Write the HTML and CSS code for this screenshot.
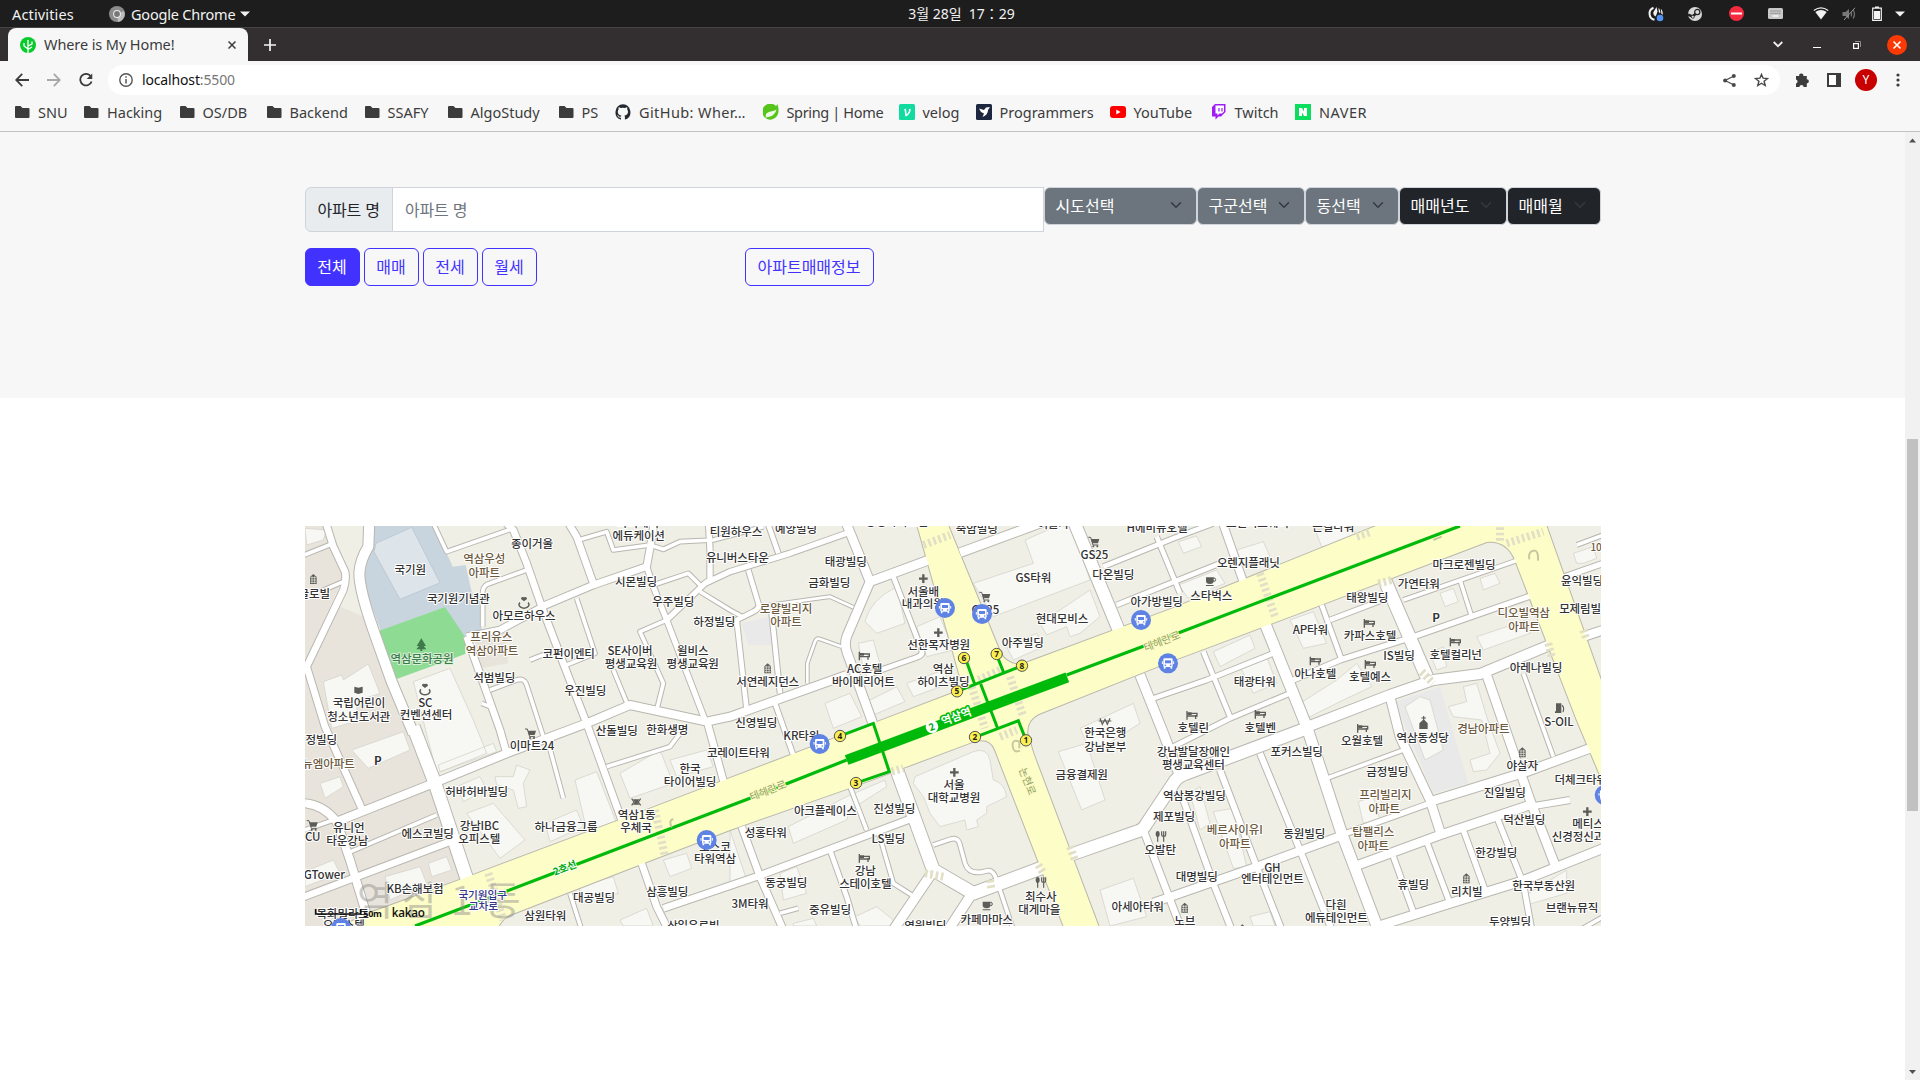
FILE: index.html
```html
<!DOCTYPE html>
<html lang="ko">
<head>
<meta charset="utf-8">
<title>Where is My Home!</title>
<link rel="stylesheet" href="styles.css">
</head>
<body>
<header class="panel">
  <div class="panel-left">
    <span class="activities">Activities</span>
    <svg class="app-icon" width="16" height="16" viewBox="0 0 16 16"><circle cx="8" cy="8" r="8" fill="#8b8b8b"/><path d="M8 8 15 5A8 8 0 0 1 9 16Z" fill="#bdbdbd"/><circle cx="8" cy="8" r="3.9" fill="#eee"/><circle cx="8" cy="8" r="2.9" fill="#777"/></svg>
    <span class="app-name">Google Chrome</span>
    <svg width="10" height="6" viewBox="0 0 10 6"><path d="M0 .5H10L5 5.5Z" fill="#f2f2f2"/></svg>
  </div>
  <div class="clock">3월 28일&nbsp; 17：29</div>
  <div class="panel-right">
    <svg class="tray-a" width="16" height="16" viewBox="0 0 16 16"><path d="M5.500 1.800A6.300 6.300 0 0 0 6.500 13.800" fill="none" stroke="#f2f2f2" stroke-width="2"/><path d="M8.500 1 5.200 6.500Q5 9 7.500 10.500L8.500 8.500 9.500 5.500ZM10.500 1.500Q13 5 12 7.500L10.800 6ZM12.800 2.800Q15.500 5.500 14.500 9L13.300 7.500Z" fill="#f2f2f2"/><circle cx="12" cy="12" r="3.300" fill="#5294f5"/></svg>
    <svg class="tray-b" width="14" height="14" viewBox="0 0 14 14"><circle cx="7" cy="7" r="7" fill="#d8d8d8"/><path d="M0 7.6 4.5 9.500 8 6.500" stroke="#222" stroke-width="2.600" fill="none"/><circle cx="9.300" cy="5" r="2.600" fill="#d8d8d8" stroke="#222" stroke-width="1.200"/><circle cx="4.800" cy="9.800" r="1.500" fill="#d8d8d8" stroke="#222" stroke-width=".8"/></svg>
    <svg class="tray-c" width="15" height="15" viewBox="0 0 15 15"><circle cx="7.5" cy="7.5" r="7.5" fill="#f52a3f"/><rect x="2" y="6.5" width="11" height="2" fill="#fff"/></svg>
    <svg class="tray-d" width="15" height="12" viewBox="0 0 15 12"><rect width="15" height="11" rx="1.5" fill="#c9c9c9"/><path d="M2.5 3H13M2.5 5.3H13" stroke="#777" stroke-dasharray="1.2 .8"/><path d="M4.5 8H10.5" stroke="#fff" stroke-width="1.3"/></svg>
    <svg class="tray-e" width="16" height="13" viewBox="0 0 16 13"><path d="M.8 3.5Q8-1.6 15.2 3.5" fill="none" stroke="#eee" stroke-width="1.2"/><path d="M2.3 5Q8 1.2 13.7 5L8 12.5Z" fill="#f2f2f2"/></svg>
    <svg class="tray-f" width="15" height="14" viewBox="0 0 15 14"><path d="M.5 5H3.500L7 2V12L3.500 9H.5Z" fill="#777"/><path d="M9 5Q10.500 7 9 9.500M11 3Q14 7 11 11.500" fill="none" stroke="#777" stroke-width="1.200"/><path d="M2 13 13 .8" stroke="#999"/></svg>
    <svg class="tray-g" width="10" height="15" viewBox="0 0 10 15"><path d="M3 1H7M.7 2.2H9.3V14.3H.7Z" fill="none" stroke="#f2f2f2" stroke-width="1.2"/><rect x="2" y="5" width="6" height="8" fill="#f2f2f2"/></svg>
    <svg width="10" height="6" viewBox="0 0 10 6"><path d="M0 .5H10L5 5.5Z" fill="#f2f2f2"/></svg>
  </div>
</header>

<div class="tabstrip">
  <div class="tab">
    <svg width="16" height="16" viewBox="0 0 16 16"><circle cx="8" cy="8" r="8" fill="#09ca2c"/><path d="M8 16V3M8 12 4 9V6M8 9 12 7V4.5M8 12.5 12 10" fill="none" stroke="#fff" stroke-width="1.3"/></svg>
    <span class="tab-title">Where is My Home!</span>
    <svg width="8" height="8" viewBox="0 0 8 8"><path d="M.5.5 7.5 7.5M7.5.5.5 7.5" stroke="#3c3c3c" stroke-width="1.5"/></svg>
  </div>
  <svg class="new-tab" width="12" height="12" viewBox="0 0 12 12"><path d="M6 0V12M0 6H12" stroke="#f5f5f5" stroke-width="1.7"/></svg>
  <div class="win-buttons">
    <svg class="wb-search" width="10" height="7" viewBox="0 0 10 7"><path d="M.7 1 5 5.2 9.3 1" fill="none" stroke="#eee" stroke-width="1.8"/></svg>
    <svg class="wb-min" width="8" height="8" viewBox="0 0 8 8"><path d="M0 6.5H8" stroke="#fff"/></svg>
    <svg class="wb-max" width="8" height="8" viewBox="0 0 8 8"><path d="M2 .5H7.5V6" fill="none" stroke="#8d8b8c"/><rect x=".6" y="2.6" width="4.8" height="4.8" fill="none" stroke="#fff" stroke-width="1.2"/></svg>
    <svg width="20" height="20" viewBox="0 0 20 20"><circle cx="10" cy="10" r="10" fill="#fb3904"/><path d="M6.5 6.5 13.5 13.5M13.5 6.5 6.5 13.5" stroke="#fff" stroke-width="1.6"/></svg>
  </div>
</div>

<div class="toolbar">
  <svg class="nav-back" width="14" height="14" viewBox="0 0 14 14"><path d="M14 7H1.5M7.2.8 1.2 7 7.2 13.2" fill="none" stroke="#3c3c3c" stroke-width="1.8"/></svg>
  <svg class="nav-fwd" width="14" height="14" viewBox="0 0 14 14"><path d="M0 7H12.5M6.8.8 12.8 7 6.8 13.2" fill="none" stroke="#a8a8a8" stroke-width="1.8"/></svg>
  <svg class="nav-reload" width="14" height="14" viewBox="0 0 15 15"><path d="M12.4 3.2A6.2 6.2 0 1 0 13.5 9" fill="none" stroke="#3c3c3c" stroke-width="1.9"/><path d="M14.2.5V6.5H8.2Z" fill="#3c3c3c"/></svg>
  <div class="omnibox">
    <svg width="14" height="14" viewBox="0 0 14 14"><circle cx="7" cy="7" r="6.2" fill="none" stroke="#555" stroke-width="1.4"/><path d="M7 6V10.5M7 3.3V4.8" stroke="#555" stroke-width="1.5"/></svg>
    <span class="url">localhost<span class="port">:5500</span></span>
    <svg class="share" width="13" height="13" viewBox="0 0 13 13"><path d="M11 2 2 6.5 11 11" fill="none" stroke="#484848" stroke-width="1.2"/><circle cx="10.8" cy="2.1" r="2" fill="#484848"/><circle cx="2.1" cy="6.5" r="2" fill="#484848"/><circle cx="10.8" cy="10.9" r="2" fill="#484848"/></svg>
    <svg width="15" height="14" viewBox="0 0 15 14"><path d="M7.5 1.4 9.1 5.2 13.5 5.5 10.1 8.3 11.2 12.5 7.5 10.2 3.8 12.5 4.9 8.3 1.5 5.5 5.9 5.2Z" fill="none" stroke="#484848" stroke-width="1.4"/></svg>
  </div>
  <svg class="ext" width="15" height="15" viewBox="0 0 15 15"><path d="M1 3H4.200A2.100 2.100 0 1 1 8.300 3H11.800V6.200A2.100 2.100 0 1 1 11.800 10.400V14H8.600A2.100 2.100 0 0 0 4.400 14H1V10.400A2 2 0 0 0 1 6.500Z" fill="#3c3c3c"/></svg>
  <svg class="side" width="14" height="14" viewBox="0 0 14 14"><rect width="14" height="14" fill="#3c3c3c"/><rect x="2" y="2" width="7" height="10" fill="#fff"/></svg>
  <div class="avatar">Y</div>
  <svg width="4" height="14" viewBox="0 0 4 14"><circle cx="2" cy="2" r="1.6" fill="#3c3c3c"/><circle cx="2" cy="7" r="1.6" fill="#3c3c3c"/><circle cx="2" cy="12" r="1.6" fill="#3c3c3c"/></svg>
</div>

<svg class="defs" width="0" height="0"><defs>
  <g id="folder"><path d="M0 3Q0 2 1 2H5.5L7.5 4H13.5Q14.5 4 14.5 5V13Q14.5 14 13.5 14H1Q0 14 0 13Z" fill="#3c3c3c"/></g>
</defs></svg>
<nav class="bookmarks">
  <a class="bm b1"><svg width="15" height="16"><use href="#folder"/></svg>SNU</a>
  <a class="bm b2"><svg width="15" height="16"><use href="#folder"/></svg>Hacking</a>
  <a class="bm b3"><svg width="15" height="16"><use href="#folder"/></svg>OS/DB</a>
  <a class="bm b4"><svg width="15" height="16"><use href="#folder"/></svg>Backend</a>
  <a class="bm b5"><svg width="15" height="16"><use href="#folder"/></svg>SSAFY</a>
  <a class="bm b6"><svg width="15" height="16"><use href="#folder"/></svg>AlgoStudy</a>
  <a class="bm b7"><svg width="15" height="16"><use href="#folder"/></svg>PS</a>
  <a class="bm b8"><svg width="16" height="16" viewBox="0 0 16 16"><path d="M8 .2a8 8 0 0 0-2.5 15.4c.4 0 .5-.2.5-.4v-1.5c-2.200.5-2.700-.9-2.700-.9-.4-.9-.9-1.200-.9-1.200-.7-.5 0-.5 0-.5.8.1 1.200.8 1.200.8.7 1.200 1.900.9 2.400.7 0-.5.300-.9.500-1.100-1.800-.2-3.700-.9-3.700-4 0-.9.300-1.600.8-2.100 0-.2-.3-1 .1-2.100 0 0 .7-.2 2.200.8a8 8 0 0 1 4 0c1.500-1 2.200-.8 2.200-.8.4 1.100.1 1.900.1 2.100.5.600.8 1.300.8 2.100 0 3.100-1.900 3.800-3.700 4 .3.200.6.700.6 1.500v2.200c0 .2.100.5.500.4A8 8 0 0 0 8 .2Z" fill="#24292f"/></svg>GitHub: Wher…</a>
  <a class="bm b9"><svg width="16" height="16" viewBox="0 0 16 16"><path d="M14.500 0C16 5 16 9 14 12A8 8 0 1 1 13 2Q14 1.500 14.500 0Z" fill="#55c41b"/><path d="M2.500 13.500C8 13 12 11 13.500 5.500 10 8 6 6.500 3 10" fill="#eefbe4"/></svg>Spring | Home</a>
  <a class="bm b10"><svg width="16" height="16" viewBox="0 0 16 16"><rect width="16" height="16" rx="1.500" fill="#12dba0"/><path d="M5 5.200 7 4.700 7.700 10.500Q10.500 8 10 5.800L9.700 5 11.500 4.700Q12.500 8.500 7.500 12.300H6.300L5.600 6.200Z" fill="#fff"/></svg>velog</a>
  <a class="bm b11"><svg width="16" height="16" viewBox="0 0 16 16"><rect width="16" height="16" rx="1.500" fill="#1e2740"/><path d="M3 4.500 8 6 10 3.500 14 3 12 6Q12 11 6.500 13L8 9.500 5 8Z" fill="#fff"/></svg>Programmers</a>
  <a class="bm b12"><svg width="16" height="16" viewBox="0 0 16 16"><rect y="2" width="16" height="12" rx="3" fill="#f00"/><path d="M6.300 5.500V10.500L10.500 8Z" fill="#fff"/></svg>YouTube</a>
  <a class="bm b13"><svg width="16" height="16" viewBox="0 0 16 16"><path d="M1 3 4 0H14.500V8L10 12.500H7.500L4.500 15.500V12.500H1Z" fill="#a01cf5"/><path d="M4.500 1.500H13V7.500L11 9.500H8.500L6.500 11.500V9.500H4.500Z" fill="#fff"/><path d="M8 4V7.500M11 4V7.500" stroke="#a01cf5" stroke-width="1.200"/></svg>Twitch</a>
  <a class="bm b14"><svg width="16" height="16" viewBox="0 0 16 16"><rect width="16" height="16" fill="#0ade5c"/><path d="M4 4H7L9 7.500V4H12V12H9L7 8.500V12H4Z" fill="#fff"/></svg>NAVER</a>
</nav>

<div class="viewport">
<main class="page">
  <section class="search">
    <div class="container">
      <div class="filters">
        <div class="input-group"><label class="addon">아파트 명</label><div class="field">아파트 명</div></div>
        <div class="select s1"><span>시도선택</span><svg width="16" height="12" viewBox="0 0 16 16"><path d="M2 5l6 6 6-6" class="chev"/></svg></div>
        <div class="select s2"><span>구군선택</span><svg width="16" height="12" viewBox="0 0 16 16"><path d="M2 5l6 6 6-6" class="chev"/></svg></div>
        <div class="select s3"><span>동선택</span><svg width="16" height="12" viewBox="0 0 16 16"><path d="M2 5l6 6 6-6" class="chev"/></svg></div>
        <div class="select dark s4"><span>매매년도</span><svg width="16" height="12" viewBox="0 0 16 16"><path d="M2 5l6 6 6-6" class="chev"/></svg></div>
        <div class="select dark s5"><span>매매월</span><svg width="16" height="12" viewBox="0 0 16 16"><path d="M2 5l6 6 6-6" class="chev"/></svg></div>
      </div>
      <div class="deals">
        <button class="btn active">전체</button><button class="btn">매매</button><button class="btn">전세</button><button class="btn">월세</button><button class="btn info">아파트매매정보</button>
      </div>
    </div>
  </section>
  <section class="map-section">
    <div class="container">
<svg class="map" width="1296" height="400" viewBox="15 18 3888 1200">
<defs>
  <g id="streets">
    <path class="w30" d="M208 0 205 80Q180 120 178 160 178 210 220 330L275 485 340 640"/>
    <path class="w40" d="M340 620 405 790 505 1090"/>
    <path class="w20" d="M75 0 100 80 135 155Q140 180 130 210L20 440 75 620 185 865"/>
    <path class="w12" d="M0 110 95 72M60 215 130 185M400 10 440 95 640 25M835 60 920 35 940 90 1050 75 1090 88 1140 65 1240 60 1390 20M1060 195 1165 160 1200 195M1200 215 1290 270 1330 292M548 320V215Q550 195 570 190L680 150M830 235 885 400 800 435M690 420 740 400M1100 300 1020 335 1090 490 1070 570M940 450 985 560M570 510 650 480Q672 472 680 495L730 650M545 550 570 560"/>
    <path class="w20" d="M610 0 640 30 680 130 725 260 790 430 860 610 900 720 965 900M800 0 830 50 880 190M725 260 880 195 1040 140 1050 85 1062 10M500 350 600 330 725 262M500 350 600 630 620 700"/>
    <path class="w16" d="M1225 0 1230 90V180L1215 190M1040 140 1060 200 1100 300 1215 600M1100 300 1215 190 1290 155 1470 100 1640 40"/>
    <path class="w24" d="M15 850Q70 855 110 905L150 1020 210 1218M110 905 400 790 620 700 860 610 990 555 1220 605 1290 590 1640 465"/>
    <path class="w12" d="M740 650 790 835M920 740 1110 680 1140 640M140 1000 410 885M0 935 100 900M810 1120 845 1230"/>
    <path class="w20" d="M0 1135 450 965M1220 600 1275 800M1025 1030 1070 1160 1105 1230M1090 1165 1370 1070 1850 890M1325 920 1380 1070 1450 1230M2530 930 2645 1230"/>
    <path class="w14" d="M1590 990 1640 1130 1670 1230M1425 550 1485 720M1400 0 1435 100"/>
    <path class="w12" d="M1650 800 1700 930M1735 935 1780 1090 1835 1125M1900 975 1950 958Q1975 950 1980 975L1995 1030Q2005 1060 2040 1057L2065 1052Q2080 1050 2090 1080L2140 1230M1440 1180 1495 1165"/>
    <path class="w40" d="M1785 735 1900 1050M1900 1050 2020 1120 2235 1040"/>
    <path class="w28" d="M1780 1230 1895 1060M2010 1130 1945 1230M2520 465 2590 640 2640 770"/>
    <path class="w36" d="M2310 1005 2510 935Q2530 930 2540 910L2620 790Q2630 770 2660 760L3020 625M2320 0 2460 340"/>
    <path class="w26" d="M1635 0 1710 185 1900 115M1710 185 1640 350Q1632 375 1642 400L1722 620M1980 98 2260-5"/>
    <path class="w14" d="M1780 170 1865 390Q1870 405 1850 412L1700 465M1345 150 1375 250Q1380 265 1360 275L1310 300 1340 570M1415 280 1440 520"/>
    <path class="w10" d="M1375 260 1590 230 1660 262M1625 380 1560 357Q1550 353 1545 365L1522 430V490"/>
    <path class="w14" d="M2410 140 2620 55 2740 10M2450 255 2610 190 2760 130M2560 535 2720 480 2920 400M2570 50 2640 220M2710 395 2790 590M2620 680 2790 595 2970 520M3065 255 3125 420M3090 300 3260 235"/>
    <path class="w22" d="M2765 0 2835 200"/>
    <path class="w32" d="M2895 310 3020 620 3125 940 3235 1230"/>
    <path class="w16" d="M2980 480 3120 420 3340 350 3700 225"/>
    <path class="w40" d="M3250 170 3380 470"/>
    <path class="w30" d="M3010 625 3270 525 3400 480 3540 462 3750 375"/>
    <path class="w26" d="M3270 530 3300 650 3390 840 3425 950M3390 845 3680 755 3870 685M3560 465 3690 840 3765 1035"/>
    <path class="w12" d="M3310 240 3660 118M3480 180 3515 290M3670 460 3760 710M3830 75 3910 45M3080 775 3310 690M3840 1230 3910 1190"/>
    <path class="w16" d="M3790 172 3910 130M3125 945 3390 850M3280 1010 3345 1190M3380 965 3450 1150M3490 930 3555 1110M3590 890 3670 1090 3695 1230"/>
    <path class="w26" d="M3850 350 3910 330M3175 1035 3420 945 3690 855M3230 1220 3450 1150 3660 1085 3910 985"/>
    <path class="w18" d="M3690 860 3810 840M2880 700 3000 990 3095 1230M2760 750 2870 1040 2945 1230M2650 840 2740 1090 2795 1230"/>
    <path class="w24" d="M2560 1148 2870 1040 3130 945"/>
  </g>
  <g id="avenues">
    <path d="M100 1235 190 1185 260 1160 500 1072 1060 862 1720 610 1990 507 1850 10H1942L2100 395Q2115 430 2160 435L2610 268 2950 130 3260 5H3735L3910 500V790L3830 600 3645 120Q3620 60 3560 66L2970 290 2610 425 2215 583Q2180 600 2182 640L2200 700 2400 1230H2295L2085 690Q2070 650 2020 665L1660 800 1290 930 1030 1030 630 1185Q600 1200 590 1235Z"/>
  </g>
  <g id="bed"><path d="M-14-12V14M-14-5H16V3H-14M12 0V12" fill="none" stroke="#5c5c58" stroke-width="4"/><path d="M-12-8H0V0H-12Z" fill="#5c5c58"/></g>
  <g id="cart"><path d="M-17-13H-10L-3 10H13" fill="none" stroke="#5c5c58" stroke-width="3"/><path d="M-9-8H16L12 5H-5Z" fill="#5c5c58"/><circle cx="-2" cy="14" r="3" fill="#5c5c58"/><circle cx="10" cy="14" r="3" fill="#5c5c58"/></g>
  <g id="house"><path d="M-10 15V-6L0-15 10-6V15Z" fill="#5c5c58"/><path d="M-4-8V13M4-8V13M-9-4H9M-9 3H9M-9 10H9" stroke="#f0efe6" stroke-width="2"/></g>
  <g id="cross"><path d="M0-13V13M-13 0H13" stroke="#5c5c58" stroke-width="7"/></g>
  <g id="ring"><path d="M-12 0A15 10 0 1 0 12 0" fill="none" stroke="#5c5c58" stroke-width="4.500"/><path d="M0-4-9-11Q-9-19-1-16 9-19 9-11Z" fill="#5c5c58"/></g>
  <g id="cup"><path d="M-15-11H8V0Q8 9-3 9-15 9-15 0ZM-15 12H8V15H-15Z" fill="#5c5c58"/><circle cx="9" cy="-4" r="5" fill="none" stroke="#5c5c58" stroke-width="3"/></g>
  <g id="fork"><path d="M-9-2V16M9-2V16M3-15V-4Q3 0 9 0T15-4V-15M9-15V0" fill="none" stroke="#5c5c58" stroke-width="3.500"/><ellipse cx="-9" cy="-7" rx="6" ry="9" fill="#5c5c58"/></g>
  <g id="bus"><circle r="30" fill="#5f83e4"/><rect x="-14" y="-15" width="28" height="26" rx="4" fill="#fff"/><path d="M-9-9H9V0H-9Z" fill="#5f83e4"/><path d="M-10 10V16M10 10V16" stroke="#fff" stroke-width="5"/><circle cx="-8" cy="6" r="2.500" fill="#5f83e4"/><circle cx="8" cy="6" r="2.500" fill="#5f83e4"/><path d="M-17-6V2M17-6V2" stroke="#fff" stroke-width="3"/></g>
</defs>
<rect x="15" y="18" width="3888" height="1200" fill="#f0efe6"/>
<path fill="#e8e4dc" d="M15 460 110 255 215 300 345 640 440 940 500 1080 180 1218H15ZM15 18H75L130 170 15 430ZM520 345 610 320 625 430 545 445Z"/>
<path fill="#c9d5de" d="M222 18H405L458 140 497 135 515 215 545 245V330L490 360 435 262 242 332 190 190Q185 140 222 80Z"/>
<path fill="#dde5ea" stroke="#b3bfc8" stroke-width="2" d="M228 70 335 22 420 188 300 238 290 220 222 95Z"/>
<path fill="#8edb94" d="M238 332 435 261 495 350 496 402 290 477Z"/>
<path fill="#e9e9ea" d="M1325 310 1410 290 1420 375H1345ZM3285 545 3420 500 3505 790 3400 820Z"/>
<g class="buildings">
  <path d="M70 485 125 465 130 480 205 432 240 520 165 545 180 600 95 625ZM15 25 80 30 70 60 20 75ZM340 485 450 445 520 600 560 700 410 760ZM155 690 310 635 330 690 205 745ZM415 735 580 670 590 695 420 755ZM60 790 120 770 130 800 75 835ZM585 770 640 770 650 735 690 750 670 790 680 860 655 865 640 810 590 795ZM470 800 540 770 560 810 490 845ZM825 780 890 755 950 910 860 930ZM735 910 830 870 850 920 750 965ZM960 760 1080 690 1120 790 990 835ZM500 880 580 850 675 960 600 1015ZM385 1030 440 1010 455 1050 395 1070ZM15 1055 100 1020 120 1060 15 1100ZM255 1070 360 1040 380 1090 270 1140ZM835 1100 940 1070 955 1120 850 1145ZM1090 1020 1160 1000 1175 1045 1110 1070ZM960 1200 1040 1165 1060 1218H970ZM1110 720 1220 690 1240 740 1130 770Z"/>
  <path d="M1695 305Q1710 240 1790 200L1815 310 1730 340ZM1675 370 1720 360 1745 450 1690 450ZM1575 550 1650 520 1685 590 1600 625ZM1700 545 1790 500 1815 545 1720 585ZM1820 490 1930 450 1950 490 1840 530ZM1850 320 1920 290 1960 390 1880 410ZM2020 190 2200 130 2175 60 2270 18 2320 20 2370 180 2080 290ZM2120 380 2210 340 2230 380 2140 420ZM2220 310 2370 210 2400 290 2340 340 2310 350 2300 320 2240 345ZM2340 625 2500 550 2520 610 2410 680 2370 690ZM2275 695 2360 670 2415 840 2345 870ZM1845 770 2020 695Q2060 680 2070 720L2080 780Q2115 790 2120 830L2060 860V880L2030 900 2035 920 2000 930 1995 900 1920 920 1890 880 1870 830 1840 790ZM1465 920 1640 830 1755 780 1760 800 1650 870 1640 900 1480 970ZM1440 1060 1490 1040 1520 1120 1450 1140ZM1665 1190 1730 1160 1780 1200 1770 1218H1680ZM1290 930 1340 1080 1300 1100 1290 1090ZM2400 1110 2500 1075 2540 1190 2430 1218ZM1480 1210 1540 1195 1550 1218H1480Z"/>
  <path d="M2635 65 2690 48 2705 80 2650 100ZM2635 195 2750 150 2775 190 2665 235ZM2810 90 2890 65 2910 110 2830 140ZM3045 30 3150 18 3180 60 3065 80ZM2740 395 2850 345 2865 385 2760 440ZM2820 440 2900 410 2930 490 2860 520ZM2970 300 3040 275 3080 370 3010 385ZM3000 550 3110 480 3170 430 3215 500 3130 540 3020 595ZM3420 220 3460 205 3475 245 3435 260ZM3540 175 3585 160 3600 190 3550 210ZM3530 350 3680 300 3690 340 3550 390ZM3445 560 3500 545 3490 500 3530 490 3560 590 3600 700 3560 750 3520 755 3510 720 3570 700 3545 600 3460 590ZM3315 560 3360 530 3390 540 3430 690 3375 720ZM3820 100 3880 80 3890 115 3850 130 3830 130ZM2740 875 2800 865 2840 1040 2800 1045ZM2670 820 2700 800 2730 910 2700 930ZM2850 1190 2910 1175 2925 1218H2860ZM3670 1130 3800 1050 3800 1120 3680 1155ZM3390 400 3430 380 3440 440 3410 450ZM3175 845 3220 830 3240 900 3190 910Z"/>
</g>
<use href="#streets" class="street-edge"/>
<use href="#avenues" class="avenue-edge"/>
<use href="#streets" class="street-fill"/>
<use href="#avenues" class="avenue-fill"/>
<g class="crosswalk">
  <path d="M1870 75 1950 45M2035 480 2100 450M3170 50 3215 35M3620 70 3730 35"/>
  <path d="M2130 470 2170 590M2015 500 2055 625M2880 160 2925 290M1065 870 1095 1010M565 1060 610 1200M3600 22 3600 70M2100 650 2150 630M1775 755 1810 745M3235 190 3275 180M3745 370 3755 410M3850 330 3860 360M2310 980 2325 1020M2215 1035 2230 1060M2070 1080 2075 1110M3365 455 3400 490M1875 1060 1930 1070"/>
</g>
<g class="subway">
  <path class="thin" d="M345 1218 760 1060 1350 835 1640 720M2300 465 2580 360 2920 230 3480 18"/>
  <path class="station" d="M1640 720 2302 472"/>
  <path class="exit" d="M1625 646 1720 610 1768 755 1672 788M1996 415 2024 492M2042 492 2094 628M1970 515 2165 438M2090 405 2112 460M2030 650 2155 602 2176 655"/>
</g>
<g class="watermark"><text x="225" y="1186">역</text><text x="360" y="1186">삼</text><text x="485" y="1186">1</text><text x="608" y="1186">동</text></g>
<g class="uturn"><path d="M1115 922Q1105 900 1120 898M2160 692Q2140 700 2138 678T2158 665V685M3688 118Q3684 95 3700 92T3714 122M3400 60 3425 50"/></g>

<g class="labels" transform="translate(0 12)">
  <text x="696" y="73">종이거울</text><text x="331" y="151" >국기원</text><text x="475" y="238">국기원기념관</text><text x="672" y="289">아모르하우스</text>
  <text x="1014" y="10">와이케이</text><text x="1016" y="48">에듀케이션</text><text x="1008" y="187">시몬빌딩</text><text x="1120" y="247">우주빌딩</text><text x="1243" y="307">하정빌딩</text>
  <text x="806" y="403">코펀이엔티</text><text x="990" y="394">SE사이버</text><text x="993" y="433">평생교육원</text><text x="1178" y="394">윌비스</text><text x="1178" y="433">평생교육원</text>
  <text x="583" y="475">석범빌딩</text><text x="856" y="514">우진빌딩</text><text x="177" y="550">국립어린이</text><text x="176" y="590">청소년도서관</text><text x="376" y="550">SC</text><text x="378" y="586">컨벤션센터</text><text x="43" y="221">글로빌</text>
  <g class="apt"><text x="553" y="118">역삼우성</text><text x="553" y="160">아파트</text><text x="574" y="352">프리유스</text><text x="576" y="394">역삼아파트</text></g>
  <text class="park" x="366" y="418">역삼문화공원</text>
</g>
<g class="labels" transform="translate(1290 12)">
  <text x="18" y="35">티원하우스</text><text x="198" y="28">예양빌딩</text><text x="22" y="115">유니버스타운</text><text x="500" y="6">강영하이츠빌</text><text x="347" y="127">태광빌딩</text><text x="298" y="188">금화빌딩</text>
  <text x="580" y="215">서울배</text><text x="578" y="253">내과의원</text><text x="626" y="376">선한목자병원</text><text x="113" y="487">서연레지던스</text><text x="404" y="448">AC호텔</text><text x="400" y="487">바이메리어트</text><text x="640" y="447">역삼</text><text x="640" y="487">하이츠빌딩</text>
  <text x="79" y="609">신영빌딩</text><text x="740" y="28">죽암빌딩</text><text x="970" y="12">여울가</text><text x="910" y="173">GS타워</text><text x="1093" y="104">GS25</text><text x="766" y="269">GS25</text><text x="1150" y="166">다온빌딩</text><text x="996" y="296">현대모비스</text><text x="878" y="370">아주빌딩</text><text x="1280" y="247">아가방빌딩</text><text x="1281" y="25">H에비뉴호텔</text>
  <text x="1126" y="640">한국은행</text><text x="1126" y="680">강남본부</text>
  <g class="apt"><text x="168" y="266">로얄빌리지</text><text x="168" y="307">아파트</text></g>
</g>
<g class="labels" transform="translate(2580 12)">
  <text x="292" y="8">오렌지스퀘어</text><text x="265" y="128">오렌지플래닛</text><text x="154" y="229">스타벅스</text><text x="520" y="22">큰길타워</text><text x="912" y="136">마크로젠빌딩</text><text x="776" y="193">가연타워</text><text x="622" y="235">태왕빌딩</text><text x="451" y="331">AP타워</text><text x="630" y="348">카파스호텔</text><text x="717" y="409">IS빌딩</text><text x="887" y="406">호텔컬리넌</text>
  <text x="466" y="463">아나호텔</text><text x="630" y="471">호텔예스</text><text x="284" y="487">태광타워</text><text x="1128" y="444">아레나빌딩</text><text x="1197" y="607">S-OIL</text><text x="1266" y="184">윤익빌딩</text><text x="1276" y="268">모제림빌딩</text>
  <text x="100" y="624">호텔린</text><text x="301" y="623">호텔벤</text><text x="606" y="664">오월호텔</text><text x="788" y="654">역삼동성당</text>
  <g class="apt"><text x="1091" y="280">디오빌역삼</text><text x="1092" y="321">아파트</text><text x="1325" y="80" class="thin-label">1004</text><text x="970" y="626">경남아파트</text></g>
  <text class="pk" x="828" y="295">P</text>
</g>
<g class="labels" transform="translate(0 612)">
  <text x="48" y="59">우정빌딩</text><text x="696" y="79">이마트24</text><text x="950" y="34">산돌빌딩</text><text x="1102" y="30">한화생명</text><text x="1315" y="98">코레이트타워</text><text x="1170" y="148">한국</text><text x="1170" y="187">타이어빌딩</text><text x="530" y="217">허바허바빌딩</text><text x="1010" y="286">역삼1동</text><text x="1008" y="324">우체국</text><text x="798" y="322">하나금융그룹</text><text x="538" y="319">강남IBC</text><text x="538" y="358">오피스텔</text><text x="383" y="343">에스코빌딩</text><text x="146" y="325">유니언</text><text x="142" y="364">타운강남</text><text x="38" y="352">CU</text><text x="73" y="464">GTower</text><text x="345" y="506">KB손해보험</text><text x="882" y="535">대공빌딩</text><text x="1102" y="516">삼흥빌딩</text><text x="736" y="589">삼원타워</text><text x="1245" y="380">포스코</text><text x="1245" y="416">타워역삼</text><text x="1180" y="618">삼일유로빌</text>
  <text x="128" y="583">목화밀라트</text><text x="131" y="616">오피스텔</text>
  <g class="apt"><text x="70" y="132">정뉴엠아파트</text></g><text class="pk" x="233" y="124">P</text>
  <g class="junction"><text x="548" y="525">국기원입구</text><text x="550" y="557">교차로</text></g>
</g>
<g class="labels" transform="translate(1290 612)">
  <text x="214" y="48">KR타워</text><text x="286" y="273">아크플레이스</text><text x="493" y="268">진성빌딩</text><text x="107" y="338">성홍타워</text><text x="475" y="358">LS빌딩</text><text x="672" y="195">서울</text><text x="672" y="235">대학교병원</text><text x="1055" y="166">금융결제원</text><text x="406" y="454">강남</text><text x="406" y="493">스테이호텔</text><text x="169" y="490">동궁빌딩</text><text x="60" y="553">3M타워</text><text x="300" y="569">중유빌딩</text><text x="586" y="618">영원빌딩</text><text x="770" y="600">카페마마스</text><text x="932" y="530">최수사</text><text x="928" y="569">대게마을</text><text x="1223" y="562">아세아타워</text><text x="1291" y="391">오발탄</text>
</g>
<g class="labels" transform="translate(2580 612)">
  <text x="100" y="97">강남발달장애인</text><text x="100" y="136">평생교육센터</text><text x="410" y="97">포커스빌딩</text><text x="682" y="157">금정빌딩</text><text x="1087" y="138">야살자</text><text x="1262" y="179">더체크타워</text><text x="1034" y="220">진일빌딩</text><text x="103" y="229">역삼봉강빌딩</text><text x="42" y="290">제포빌딩</text><text x="433" y="342">동원빌딩</text><text x="1093" y="301">덕산빌딩</text><text x="1284" y="313">메티스</text><text x="1254" y="352">신경정신과</text><text x="1009" y="400">한강빌딩</text><text x="337" y="443">GH</text><text x="337" y="478">엔터테인먼트</text><text x="110" y="471">대명빌딩</text><text x="760" y="495">휴빌딩</text><text x="920" y="517">리치빌</text><text x="1151" y="498">한국부동산원</text><text x="528" y="555">다흰</text><text x="529" y="594">에듀테인먼트</text><text x="1236" y="564">브랜뉴뮤직</text><text x="1050" y="607">두양빌딩</text><text x="74" y="604">노브</text>
  <g class="apt"><text x="676" y="226">프리빌리지</text><text x="673" y="268">아파트</text><text x="640" y="336">탑팰리스</text><text x="640" y="378">아파트</text><text x="224" y="331">베르사이유I</text><text x="224" y="373">아파트</text></g>
</g>
<g>
  <use href="#house" x="40" y="177"/><use href="#ring" x="672" y="248"/><use href="#ring" x="375" y="508"/><use href="#house" x="1403" y="445"/><use href="#cross" x="1870" y="176"/><use href="#cross" x="1915" y="338"/><use href="#bed" x="1692" y="407"/><use href="#cart" x="2382" y="65"/><use href="#cart" x="2055" y="230"/><use href="#cup" x="2733" y="183"/>
  <use href="#bed" x="3207" y="309"/><use href="#bed" x="3465" y="365"/><use href="#bed" x="3045" y="422"/><use href="#bed" x="3210" y="432"/><use href="#bed" x="2675" y="585"/><use href="#bed" x="2880" y="582"/><use href="#bed" x="3187" y="624"/><use href="#cart" x="692" y="640"/><use href="#cart" x="37" y="915"/><use href="#cross" x="1963" y="757"/><use href="#bed" x="1692" y="1014"/><use href="#cup" x="2063" y="1156"/><use href="#fork" x="2222" y="1087"/><use href="#fork" x="2582" y="949"/><use href="#house" x="3667" y="697"/><use href="#cross" x="3862" y="875"/><use href="#house" x="3499" y="1075"/><use href="#house" x="2654" y="1163"/><use href="#house" x="2827" y="1228"/>
  <path fill="#3f7a4a" d="M364 355 378 378H371L379 388H367V393H361V388H349L357 378H350Z"/>
  <path fill="#5c5c58" d="M163 500 175 503 188 500V518L175 522 163 518ZM3358 627V610L3371 598 3383 610V627ZM3768 550H3784V579H3765V574H3768ZM999 838H1018L1013 846 1018 854H999L1004 846Z"/><path d="M3371 588V602M3364 594H3378M3786 556Q3794 562 3789 576M995 836 1002 846 995 856M1022 836 1015 846 1022 856M2400 595 2407 613 2415 598 2422 613 2430 595M2396 603H2434" fill="none" stroke="#5c5c58" stroke-width="3.500"/>
  <use href="#bus" x="1935" y="264"/><use href="#bus" x="2046" y="282"/><use href="#bus" x="2523" y="300"/><use href="#bus" x="2604" y="430"/><use href="#bus" x="1559" y="672"/><use href="#bus" x="1220" y="960"/><use href="#bus" x="123" y="1224"/><use href="#bus" x="3914" y="825"/>
</g>
<g class="road-names">
  <text transform="translate(1408 822) rotate(-21)">테헤란로</text><text transform="translate(2590 374) rotate(-21)">테헤란로</text><text transform="translate(2172 788) rotate(68)">논현로</text>
  <text class="line2" transform="translate(798 1054) rotate(-21)">2호선</text>
</g>
<g class="exits">
  <g><circle cx="2178" cy="661" r="17"/><text x="2178" y="670">1</text></g><g><circle cx="2025" cy="651" r="17"/><text x="2025" y="660">2</text></g><g><circle cx="1668" cy="789" r="17"/><text x="1668" y="798">3</text></g><g><circle cx="1620" cy="648" r="17"/><text x="1620" y="657">4</text></g><g><circle cx="1971" cy="514" r="17"/><text x="1971" y="523">5</text></g><g><circle cx="1992" cy="414" r="17"/><text x="1992" y="423">6</text></g><g><circle cx="2090" cy="402" r="17"/><text x="2090" y="411">7</text></g><g><circle cx="2166" cy="437" r="17"/><text x="2166" y="446">8</text></g>
</g>
<g class="station-name"><circle cx="1896" cy="620" r="19"/><text class="num" transform="translate(1899 631) rotate(-20)">2</text><text class="name" transform="translate(1973 601) rotate(-20)">역삼역</text></g>
<g class="scale"><path d="M47 1167V1182H182V1167"/><text x="190" y="1190">50m</text><text class="brand" x="275" y="1190">kakao</text></g>
</svg>
    </div>
  </section>
</main>
<aside class="scrollbar">
  <svg width="15" height="17" viewBox="0 0 15 17"><path d="M4 10.500H11L7.500 6.500Z" fill="#505050"/></svg>
  <div class="track"><div class="thumb"></div></div>
  <svg width="15" height="17" viewBox="0 0 15 17"><path d="M4 7H11L7.500 11Z" fill="#505050"/></svg>
</aside>
</div>
</body>
</html>
```
FILE: styles.css
```css
* { box-sizing: border-box; }
body { margin: 0; width: 1920px; height: 1080px; overflow: hidden; display: flex; flex-direction: column; background: #fff; font-family: "Noto Sans", "Noto Sans CJK KR", sans-serif; color: #3c3c3c; }
svg { display: block; flex: none; }
.defs { position: absolute; }

.panel { height: 28px; flex: none; background: #1d1d1d; border-bottom: 1px solid #454344; display: grid; grid-template-columns: 1fr auto 1fr; align-items: center; color: #f2f2f2; font-size: 14.5px; line-height: 26px; }
.panel-left { display: flex; align-items: center; padding-left: 12px; height: 26px; }
.activities { width: 97px; letter-spacing: .15px; }
.app-icon { margin-right: 6px; }
.app-name { width: 109px; letter-spacing: -.2px; white-space: nowrap; }
.clock { font-size: 14px; padding-left: 3px; white-space: nowrap; }
.panel-right { display: flex; align-items: center; justify-content: flex-end; padding-right: 15px; }
.tray-a { margin-right: 24px; }
.tray-b { margin-right: 27px; }
.tray-c { margin-right: 24px; }
.tray-d { margin-right: 30px; }
.tray-e { margin-right: 13px; }
.tray-f { margin-right: 15px; }
.tray-g { margin-right: 13px; }

.tabstrip { height: 33px; flex: none; background: #332f30; display: flex; align-items: center; padding: 0 13px 0 8px; }
.tab { width: 240px; height: 33px; background: #f7f7f7; border-radius: 8px 8px 0 0; display: flex; align-items: center; padding: 0 12px; font-size: 14.500px; }
.tab-title { flex: 1; padding: 0 0 2px 8px; letter-spacing: -.1px; white-space: nowrap; }
.new-tab { margin-left: 16px; }
.win-buttons { margin-left: auto; display: flex; align-items: center; }
.wb-search { margin-right: 30px; }
.wb-min { margin-right: 32px; }
.wb-max { margin-right: 26px; }

.toolbar { height: 38px; flex: none; background: #f7f7f7; display: flex; align-items: center; padding: 0 19px 0 15px; }
.nav-back, .nav-fwd { margin-right: 18px; }
.nav-reload { margin-right: 15px; }
.omnibox { flex: none; width: 1672px; height: 30px; border-radius: 15px; background: #fff; display: flex; align-items: center; padding: 0 11px 0 11px; }
.url { flex: 1; padding: 0 0 1px 9px; font-size: 14px; color: #111; letter-spacing: -.15px; }
.port { color: #777; }
.share { margin-right: 18px; }
.ext { margin: 0 17px 0 15px; }
.side { margin-right: 14px; }
.avatar { width: 22px; height: 22px; border-radius: 50%; background: #c80000; color: #fff; font-size: 12px; line-height: 22px; text-align: center; margin-right: 19px; }

.bookmarks { height: 33px; flex: none; background: #f7f7f7; border-bottom: 1px solid #c2c2c2; display: flex; align-items: flex-start; padding: 3px 0 0 15px; font-size: 14.500px; }
.bm { display: flex; flex: none; align-items: center; gap: 8px; height: 20px; white-space: nowrap; }
.b1 { width: 69px; } .b2 { width: 95.500px; } .b3 { width: 87px; } .b4 { width: 98px; } .b5 { width: 83px; } .b6 { width: 111px; } .b7 { width: 56.500px; }
.b8 { width: 147.500px; letter-spacing: .4px; } .b9 { width: 136px; letter-spacing: -.35px; } .b10 { width: 77px; } .b11 { width: 134px; } .b12 { width: 101px; } .b13 { width: 84.500px; } .b14 { letter-spacing: .5px; }

.viewport { flex: 1; display: flex; min-height: 0; }
.page { flex: 1; font-family: "Noto Sans CJK KR", sans-serif; font-size: 16px; }
.container { width: 1296px; margin: 0 auto; }
.search { height: 266px; background: #f7f7f7; padding-top: 55px; }
.filters { display: flex; align-items: flex-start; height: 45px; }
.input-group { flex: 1; height: 45px; display: flex; line-height: 43px; }
.addon { width: 88px; padding-left: 12px; border: 1px solid #ced4da; border-radius: 6px 0 0 6px; background: #e9ecef; color: #212529; letter-spacing: -.2px; }
.field { flex: 1; margin-left: -1px; padding-left: 12.500px; border: 1px solid #ced4da; background: #fff; color: #6c757d; letter-spacing: -.2px; }
.select { height: 38px; border: 1px solid #ced4da; border-radius: 6px; background: #6c757d; color: #fff; line-height: 35px; display: flex; align-items: center; justify-content: space-between; padding: 0 12px 2px 11px; }
.dark { background: #212529; }
.chev { fill: none; stroke: #343a40; stroke-width: 2; stroke-linecap: round; stroke-linejoin: round; }
.s1 { width: 153px; } .s2 { width: 108px; } .s3 { width: 94px; } .s4 { width: 108px; } .s5 { width: 94px; }
.deals { display: flex; gap: 4px; margin-top: 16px; }
.btn { height: 38px; padding: 0 0 2px; width: 55px; border: 1px solid #4232ff; border-radius: 6px; background: transparent; color: #4232ff; font: inherit; line-height: 32px; white-space: nowrap; }
.btn.active { background: #4232ff; color: #fff; }
.btn.info { width: 129px; margin-left: 204px; }
.map-section { padding-top: 128px; }

.map { font-family: "Noto Sans CJK KR", sans-serif; }
.w10 { stroke-width: calc(var(--edge) + 8px); } .w12 { stroke-width: calc(var(--edge) + 11px); } .w14 { stroke-width: calc(var(--edge) + 14px); }
.w16 { stroke-width: calc(var(--edge) + 16px); } .w18 { stroke-width: calc(var(--edge) + 18px); } .w20 { stroke-width: calc(var(--edge) + 20px); }
.w22 { stroke-width: calc(var(--edge) + 22px); } .w24 { stroke-width: calc(var(--edge) + 24px); } .w26 { stroke-width: calc(var(--edge) + 26px); }
.w28 { stroke-width: calc(var(--edge) + 28px); } .w30 { stroke-width: calc(var(--edge) + 30px); } .w32 { stroke-width: calc(var(--edge) + 32px); }
.w36 { stroke-width: calc(var(--edge) + 36px); } .w40 { stroke-width: calc(var(--edge) + 38px); }
.street-edge { --edge: 6px; fill: none; stroke: #b8b7b0; stroke-linejoin: round; }
.street-fill { --edge: 0px; fill: none; stroke: #fff; stroke-linejoin: round; }
.avenue-edge { fill: none; stroke: #b8b7ac; stroke-width: 6; }
.avenue-fill { fill: #fdfdc8; }
.buildings { fill: #f7f7f3; stroke: #d6d5cd; stroke-width: 2.500; }
.crosswalk { fill: none; stroke: #e1dfc6; stroke-width: 24; stroke-dasharray: 8 8; }
.uturn { fill: none; stroke: #c8c7a0; stroke-width: 6; }
.subway { fill: none; stroke: #00ba0b; }
.thin { stroke-width: 9.500; }
.station { stroke-width: 31; }
.exit { stroke-width: 9; }
.watermark { font-size: 118px; font-weight: 400; fill: #8d8d88; opacity: .45; text-anchor: middle; }
.labels { font-size: 34.500px; font-weight: 500; letter-spacing: -.3px; text-anchor: middle; fill: #333; stroke: #fff; stroke-width: 6px; stroke-linejoin: round; paint-order: stroke; }
.apt { fill: #6d5a40; }
.thin-label { font-size: 30px; }
.park { fill: #3f7a4a; stroke: #d7f0d7; }
.junction { fill: #35358c; font-size: 32px; }
.pk { font-weight: 700; }
.road-names { font-size: 31px; text-anchor: middle; fill: #8f9c5c; stroke: #fdfcc6; stroke-width: 5px; paint-order: stroke; }
.line2 { fill: #00a80a; stroke: #fff; font-weight: 700; font-size: 30px; }
.exits circle { fill: #fbf04f; stroke: #555; stroke-width: 3; }
.exits text { font: 700 25px "Noto Sans", sans-serif; text-anchor: middle; fill: #222; }
.station-name { text-anchor: middle; fill: #fff; }
.station-name .num { fill: #00a80a; font-size: 29px; font-weight: 700; }
.station-name .name { font-size: 34px; font-weight: 700; stroke: #00ba0b; stroke-width: 9px; stroke-linejoin: round; paint-order: stroke; }
.scale { font: 700 27px "Open Sans", sans-serif; fill: #111; letter-spacing: -1px; }
.scale path { fill: none; stroke: #111; stroke-width: 5; }
.brand { font-size: 35px; font-weight: 600; letter-spacing: -.5px; }

.scrollbar { width: 15px; flex: none; background: #f1f1f1; display: flex; flex-direction: column; }
.track { flex: 1; padding: 290px 2px 0; }
.thumb { height: 372px; background: #c1c1c1; }
```
